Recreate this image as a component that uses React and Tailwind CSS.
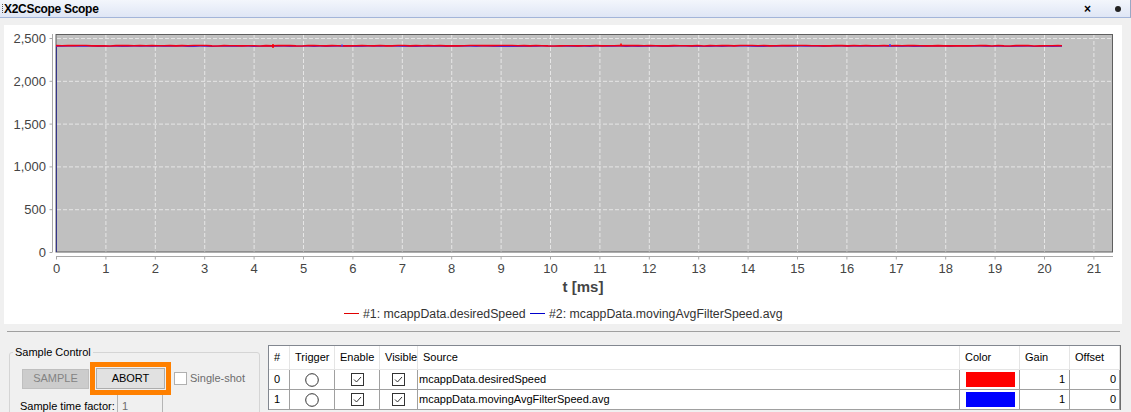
import React from "react";

const X0 = 56;
const XS = 49.4;
const Y0 = 252;
const YS = 214 / 2500;

const xOf = (t) => X0 + t * XS;
const yOf = (v) => Y0 - v * YS;

// small wobble so the two traces don't look perfectly flat
function trace(offset, seed) {
  const pts = [];
  let s = seed;
  for (let x = 56; x <= 1062; x += 6) {
    s = (s * 9301 + 49297) % 233280;
    const j = (s / 233280 - 0.5) * 0.5;
    pts.push(`${x},${(45.8 + offset + j).toFixed(2)}`);
  }
  pts.push(`1062,${(45.8 + offset).toFixed(2)}`);
  return pts.join(" ");
}

function Chart() {
  const yTicks = [0, 500, 1000, 1500, 2000, 2500];
  const xTicks = Array.from({ length: 22 }, (_, i) => i);
  return (
    <svg width="1118" height="299" viewBox="4 25 1118 299" className="block">
      <rect x="56" y="34.5" width="1056.5" height="217.5" fill="#c0c0c0" stroke="#5f5f5f" strokeWidth="1" />
      {yTicks.slice(1).map((v) => (
        <line key={v} x1="57" x2="1112" y1={yOf(v) + 0.5} y2={yOf(v) + 0.5} stroke="#e6e6e6" strokeDasharray="4 2" />
      ))}
      {xTicks.slice(1).map((t) => (
        <line key={t} x1={xOf(t) + 0.5} x2={xOf(t) + 0.5} y1="35" y2="251.5" stroke="#e6e6e6" strokeDasharray="4 2" />
      ))}
      {/* axes */}
      <line x1="52.5" x2="52.5" y1="34" y2="252" stroke="#a8a8a8" />
      {yTicks.map((v) => (
        <g key={v}>
          <line x1="49.5" x2="52.5" y1={yOf(v) + 0.5} y2={yOf(v) + 0.5} stroke="#a8a8a8" />
          <text x="46" y={yOf(v) + 5} textAnchor="end" fontSize="13" fill="#444" fontFamily="'Liberation Sans', Arial, sans-serif">
            {v.toLocaleString("en-US")}
          </text>
        </g>
      ))}
      <line x1="56" x2="1113" y1="256.5" y2="256.5" stroke="#a8a8a8" />
      {xTicks.map((t) => (
        <g key={t}>
          <line x1={xOf(t) + 0.5} x2={xOf(t) + 0.5} y1="256.5" y2="259.5" stroke="#a8a8a8" />
          <text x={xOf(t) + 0.5} y="273" textAnchor="middle" fontSize="13" fill="#444" fontFamily="'Liberation Sans', Arial, sans-serif">
            {t}
          </text>
        </g>
      ))}
      {/* data */}
      <line x1="56.5" x2="56.5" y1="252" y2="46" stroke="#34348a" strokeWidth="1" />
      <polyline points={trace(0.5, 7)} fill="none" stroke="#3030ff" strokeWidth="1" />
      <polyline points={trace(-0.1, 31)} fill="none" stroke="#f00018" strokeWidth="1.6" />
      <line x1="273" x2="273" y1="44" y2="48" stroke="#ff0000" strokeWidth="1.5" />
      <line x1="621" x2="621" y1="43.5" y2="46" stroke="#ff0000" strokeWidth="1.5" />
      <line x1="342" x2="342" y1="44.5" y2="46.5" stroke="#4040ff" strokeWidth="1.5" />
      <line x1="890" x2="890" y1="44" y2="46.5" stroke="#4040ff" strokeWidth="1.5" />
      <text x="583" y="292" textAnchor="middle" fontSize="15" fontWeight="bold" fill="#444" fontFamily="'Liberation Sans', Arial, sans-serif">
        t [ms]
      </text>
      <g fontSize="12.3" fill="#333" fontFamily="'Liberation Sans', Arial, sans-serif">
        <line x1="344" x2="359" y1="313.5" y2="313.5" stroke="#e00000" />
        <text x="363" y="318">#1: mcappData.desiredSpeed</text>
        <line x1="530" x2="545" y1="313.5" y2="313.5" stroke="#0000cc" />
        <text x="549" y="318">#2: mcappData.movingAvgFilterSpeed.avg</text>
      </g>
    </svg>
  );
}

function CheckBox() {
  return (
    <svg width="13" height="13" viewBox="0 0 13 13">
      <rect x="0.5" y="0.5" width="12" height="12" fill="#fff" stroke="#333" />
      <path d="M3 6.5 L5.5 9 L10 4" fill="none" stroke="#333" strokeWidth="1" />
    </svg>
  );
}

function Radio() {
  return (
    <svg width="14" height="14" viewBox="0 0 14 14">
      <circle cx="7" cy="7" r="6.3" fill="#fff" stroke="#333" />
    </svg>
  );
}

const rows = [
  { id: 0, source: "mcappData.desiredSpeed", color: "bg-[#ff0000]" },
  { id: 1, source: "mcappData.movingAvgFilterSpeed.avg", color: "bg-[#0000ff]" },
];

const cols = ["#", "Trigger", "Enable", "Visible", "Source", "Color", "Gain", "Offset"];

export default function App() {
  return (
    <div className="w-[1131px] h-[412px] bg-[#f0f0f0] overflow-hidden flex flex-col text-[11px] text-black" style={{ fontFamily: "'Liberation Sans', Arial, sans-serif" }}>
      {/* title bar */}
      <div className="h-[18px] shrink-0 flex items-center bg-gradient-to-b from-[#f3f6fc] to-[#dfe6f5] border-b border-[#a3b5d9] border-r border-r-[#9aa8c4]">
        <span className="w-[3px] h-[9px] border-r border-dotted border-[#555] mr-[1px]"></span>
        <span className="font-bold text-[12px] tracking-[-0.3px]">X2CScope Scope</span>
        <span className="ml-auto text-[12px] font-bold leading-none mr-[24px]">×</span>
        <span className="w-[6px] h-[6px] rounded-full bg-[#222] mr-[9px]"></span>
      </div>

      {/* chart panel */}
      <div className="mt-[7px] ml-[4px] w-[1118px] h-[299px] bg-white shrink-0">
        <Chart />
      </div>

      <div className="mt-[7px] ml-[7px] w-[1113px] h-px bg-[#a0a0a0] shrink-0"></div>

      {/* bottom area */}
      <div className="mt-[13px] flex items-start">
        <fieldset className="ml-[9px] w-[251px] border border-[#d5d5d5] rounded-[3px] pl-[12px] pr-[8px] pb-0">
          <legend className="-ml-[9px] px-[2px] text-[11px] leading-[15px]">Sample Control</legend>
          <div className="flex items-center mt-[2px]">
            <div className="w-[67px] h-[20px] bg-[#cccccc] border border-[#bfbfbf] text-[#838383] flex items-center justify-center">
              SAMPLE
            </div>
            <div className="ml-[1px] w-[81px] h-[33px] border-[5px] border-[#ff8000] p-px">
              <div className="w-full h-full bg-[#e1e1e1] border border-[#adadad] flex items-center justify-center">
                ABORT
              </div>
            </div>
            <div className="ml-[3px] w-[13px] h-[13px] bg-white border border-[#b0b0b0]"></div>
            <span className="ml-[3px] text-[#6d6d6d]">Single-shot</span>
          </div>
          <div className="flex items-start -ml-[2px]">
            <span className="mt-[3px] w-[97px]">Sample time factor:</span>
            <div className="w-[46px] h-[20px] border-l border-r border-[#b5b5b5] text-[#6d6d6d] pl-[4px] pt-[3px]">1</div>
          </div>
        </fieldset>

        <div className="ml-[8px] w-[853px] border-l border-t border-r border-l-[#828790] border-t-[#828790] border-r-[#6d6d6d] border-r-2 bg-white">
          <div className="grid grid-cols-[21px_45px_45px_38px_542px_60px_50px_50px]">
            {cols.map((c) => (
              <div key={c} className="h-[24px] border-r border-b border-[#e5e5e5] flex items-center pl-[5px]">
                {c}
              </div>
            ))}
            {rows.map((r) => (
              <React.Fragment key={r.id}>
                <div className="h-[20px] border-r border-b border-[#a0a0a0] flex items-center pl-[5px]">{r.id}</div>
                <div className="h-[20px] border-r border-b border-[#a0a0a0] flex items-center justify-center"><Radio /></div>
                <div className="h-[20px] border-r border-b border-[#a0a0a0] flex items-center justify-center"><CheckBox /></div>
                <div className="h-[20px] border-r border-b border-[#a0a0a0] flex items-center justify-center"><CheckBox /></div>
                <div className="h-[20px] border-r border-b border-[#a0a0a0] flex items-center pl-[1px]">{r.source}</div>
                <div className="h-[20px] border-r border-b border-[#a0a0a0] flex items-center pl-[6px]">
                  <div className={`w-[49px] h-[15px] ${r.color}`}></div>
                </div>
                <div className="h-[20px] border-r border-b border-[#a0a0a0] flex items-center justify-end pr-[4px]">1</div>
                <div className="h-[20px] border-r border-b border-[#a0a0a0] flex items-center justify-end pr-[3px]">0</div>
              </React.Fragment>
            ))}
          </div>
        </div>
      </div>
    </div>
  );
}
